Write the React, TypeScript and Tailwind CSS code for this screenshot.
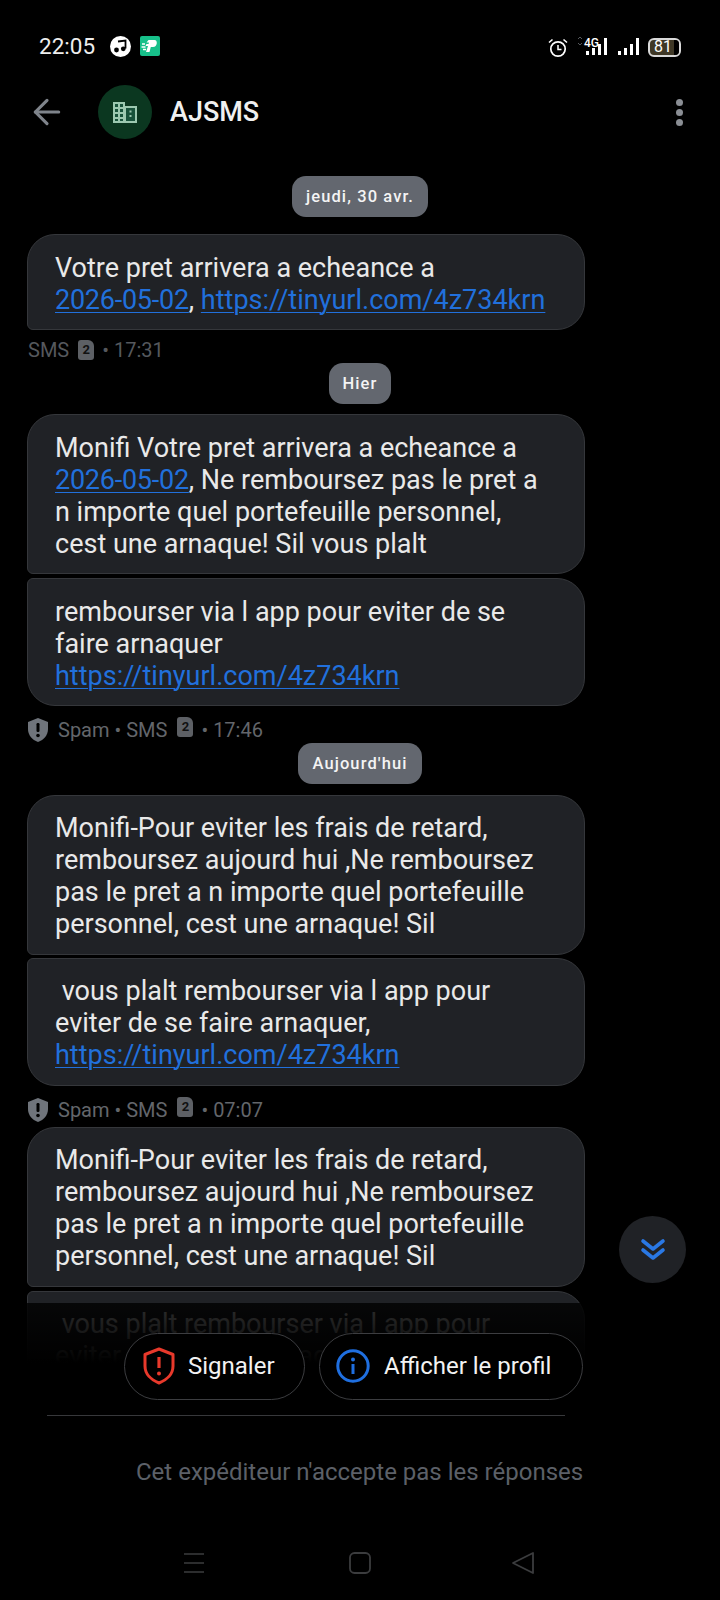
import { ArrowLeft } from "lucide-react";

const Link = ({ children, date }: { children: React.ReactNode; date?: boolean }) => (
  <span className={`text-[#2170dc] underline decoration-1 underline-offset-[3px] ${date ? "tracking-[-0.25px]" : ""}`}>
    {children}
  </span>
);

function Bubble({ children, className = "" }: { children: React.ReactNode; className?: string }) {
  return (
    <div
      className={`w-[558px] rounded-[28px] border border-[#35373b] bg-[#202226] px-[27px] text-[27px] leading-[32px] text-[#e9e9e9] whitespace-pre ${className}`}
    >
      {children}
    </div>
  );
}

function DateChip({ label, className = "" }: { label: string; className?: string }) {
  return (
    <div className={`flex justify-center ${className}`}>
      <span className="flex h-[41px] items-center rounded-[14px] bg-[#63676f] px-[14px] pt-[2px] text-[16.5px] font-medium tracking-[1.1px] text-[#f4f4f4]">
        {label}
      </span>
    </div>
  );
}

function SimIcon({ className = "" }: { className?: string }) {
  return (
    <span
      className={`inline-flex h-[20px] w-[16px] items-center justify-center rounded-[3px] rounded-tr-[6px] bg-[#5d6065] text-[13px] font-bold text-[#111] ${className}`}
    >
      2
    </span>
  );
}

function Meta({ time, spam }: { time: string; spam?: boolean }) {
  if (spam) {
    return (
      <div className="flex h-[41px] items-center pt-[7px] text-[20px] text-[#63666b]">
        <svg width="22" height="26" viewBox="0 0 22 26" className="mr-[9px]">
          <path d="M11 1 L21 5 V12 C21 18 17 23 11 25 C5 23 1 18 1 12 V5 Z" fill="#6f747b" />
          <rect x="9.5" y="6" width="3" height="9" rx="1.2" fill="#000" />
          <circle cx="11" cy="18.5" r="1.8" fill="#000" />
        </svg>
        <span>Spam • SMS</span>
        <SimIcon className="ml-[10px] mr-[8px] -mt-[6px]" />
        <span>• {time}</span>
      </div>
    );
  }
  return (
    <div className="flex h-[37px] items-center pl-px pt-[3px] text-[20px] text-[#55585d]">
      <span>SMS</span>
      <SimIcon className="ml-[9px] mr-[8px]" />
      <span>• {time}</span>
    </div>
  );
}

function StatusBar() {
  return (
    <div className="flex h-[85px] items-start justify-between pl-[39px] pr-[39px] pt-[33px] text-white">
      <div className="flex items-center">
        <span className="text-[22.5px] leading-[26px] text-[#eeeeee]">22:05</span>
        <svg width="21" height="21" viewBox="0 0 21 21" className="ml-[15px]">
          <circle cx="10.5" cy="10.5" r="10.5" fill="#fff" />
          <path d="M8 5.5 L15.5 4.5 V12.5" stroke="#000" strokeWidth="1.8" fill="none" />
          <circle cx="6.5" cy="14" r="2.4" fill="#000" />
          <circle cx="13.3" cy="12.8" r="2.4" fill="#000" />
        </svg>
        <svg width="20" height="20" viewBox="0 0 20 20" className="ml-[9px]">
          <rect width="20" height="20" rx="2" fill="#17c08a" />
          <path d="M8.5 4 H14.5 C18 4 17.5 11 13 11 H10.8 L9.5 16 H6 L8 10 H5.5 L6.5 8 H8.5 L9 6.5 H6.5 Z" fill="#fff" />
          <path d="M2 8 H5 M1.5 11 H5.5 M3 13.5 H6" stroke="#fff" strokeWidth="1.3" />
        </svg>
      </div>
      <div className="mt-[3px] flex items-center">
        <svg width="20" height="20" viewBox="0 0 20 20" className="-ml-[1px] mr-[1px] mt-[2px]">
          <circle cx="10" cy="11" r="7.2" stroke="#fff" strokeWidth="1.7" fill="none" />
          <path d="M10 7 V11.5 H13.5" stroke="#fff" strokeWidth="1.5" fill="none" />
          <path d="M1 4.5 L4.5 1.5 M19 4.5 L15.5 1.5" stroke="#fff" strokeWidth="1.6" />
        </svg>
        <div className="relative ml-[8px] h-[20px] w-[32px]">
          <span className="absolute left-[7px] -top-[1px] text-[12px] font-medium leading-[14px] text-white">4G</span>
          <svg width="32" height="20" viewBox="0 0 32 20" className="absolute inset-0">
            <path d="M1 2 L3 0 L5 2 M1 6 L3 8 L5 6" stroke="#55585c" strokeWidth="1" fill="none" />
            <rect x="9" y="14" width="3" height="4" fill="#fff" />
            <rect x="15" y="11" width="3" height="7" fill="#fff" />
            <rect x="21" y="7" width="3" height="11" fill="#fff" />
            <rect x="27" y="1" width="3" height="17" fill="#fff" />
          </svg>
        </div>
        <svg width="23" height="18" viewBox="0 0 23 18" className="ml-[8px]">
          <rect x="1" y="13" width="3" height="4" fill="#fff" />
          <rect x="7" y="10" width="3" height="7" fill="#fff" />
          <rect x="13" y="6" width="3" height="11" fill="#fff" />
          <rect x="19" y="0" width="3" height="17" fill="#fff" />
        </svg>
        <div className="relative ml-[8px] flex h-[19px] w-[33px] items-center overflow-hidden rounded-[6px] border-2 border-[#d9d9d9] bg-[#3f3826]">
          <span className="pl-[4px] text-[16px] leading-[14px] text-white">81</span>
          <span className="absolute bottom-0 right-0 top-0 w-[5px] bg-black" />
        </div>
      </div>
    </div>
  );
}

function Header() {
  return (
    <div className="flex h-[54px] items-center">
      <ArrowLeft size={40} strokeWidth={1.9} className="ml-[27px] text-[#7f848b]" />
      <div className="ml-[31px] flex h-[54px] w-[54px] items-center justify-center rounded-full bg-[#0b3720]">
        <svg width="24" height="21" viewBox="0 0 24 21" fill="#9cc8b0">
          <path d="M0 0 H12 V4 H24 V21 H0 Z" />
          <path
            d="M2 2 H5 V5 H2 Z M7 2 H10 V5 H7 Z M2 7 H5 V10 H2 Z M7 7 H10 V10 H7 Z M2 12 H5 V15 H2 Z M7 12 H10 V15 H7 Z M2 17 H5 V19 H2 Z M7 17 H10 V19 H7 Z M13 6 H22 V19 H13 Z"
            fill="#17523a"
          />
          <path d="M16.5 8.5 H18.5 V10.5 H16.5 Z M16.5 13 H18.5 V15 H16.5 Z" />
        </svg>
      </div>
      <span className="ml-[18px] mt-px text-[27px] font-medium text-[#f0f0f0]">AJSMS</span>
      <div className="ml-auto mr-[37px] flex flex-col gap-[3px]">
        <span className="h-[7px] w-[7px] rounded-full bg-[#8a8e94]" />
        <span className="h-[7px] w-[7px] rounded-full bg-[#8a8e94]" />
        <span className="h-[7px] w-[7px] rounded-full bg-[#8a8e94]" />
      </div>
    </div>
  );
}

function Messages() {
  return (
    <div className="pl-[27px]">
      <div className="w-[666px]">
        <DateChip label="jeudi, 30 avr." className="pt-[37px]" />
        <Bubble className="mt-[17px] rounded-bl-[6px] pb-[13px] pt-[17px]">
          {"Votre pret arrivera a echeance a\n"}
          <Link date>2026-05-02</Link>, <Link>https://tinyurl.com/4z734krn</Link>
        </Bubble>
        <Meta time="17:31" />
        <DateChip label="Hier" className="-mt-[4px]" />
        <Bubble className="mt-[10px] rounded-bl-[6px] pb-[13px] pt-[17px]">
          {"Monifi Votre pret arrivera a echeance a\n"}
          <Link date>2026-05-02</Link>
          {", Ne remboursez pas le pret a\nn importe quel portefeuille personnel,\ncest une arnaque! Sil vous plalt"}
        </Bubble>
        <Bubble className="mt-[4px] rounded-tl-[6px] pb-[13px] pt-[17px]">
          {"rembourser via l app pour eviter de se\nfaire arnaquer\n"}
          <Link>https://tinyurl.com/4z734krn</Link>
        </Bubble>
        <Meta time="17:46" spam />
        <DateChip label="Aujourd'hui" className="-mt-[4px]" />
        <Bubble className="mt-[11px] rounded-bl-[6px] pb-[14px] pt-[16px]">
          {"Monifi-Pour eviter les frais de retard,\nremboursez aujourd hui ,Ne remboursez\npas le pret a n importe quel portefeuille\npersonnel, cest une arnaque! Sil"}
        </Bubble>
        <Bubble className="mt-[3px] rounded-tl-[6px] pb-[14px] pt-[16px]">
          {" vous plalt rembourser via l app pour\neviter de se faire arnaquer,\n"}
          <Link>https://tinyurl.com/4z734krn</Link>
        </Bubble>
        <Meta time="07:07" spam />
        <Bubble className="rounded-bl-[6px] pb-[14px] pt-[16px]">
          {"Monifi-Pour eviter les frais de retard,\nremboursez aujourd hui ,Ne remboursez\npas le pret a n importe quel portefeuille\npersonnel, cest une arnaque! Sil"}
        </Bubble>
        <Bubble className="mt-[4px] rounded-tl-[6px] pb-[14px] pt-[16px]">
          {" vous plalt rembourser via l app pour\neviter de se faire arnaquer,\n"}
          <Link>https://tinyurl.com/4z734krn</Link>
        </Bubble>
      </div>
    </div>
  );
}

function ActionBar() {
  return (
    <div className="absolute inset-x-0 bottom-0 top-[1303px] bg-linear-to-b from-[#000000cc] to-black to-[60px]">
      <div className="ml-[124px] mt-[30px] flex gap-[14px]">
        <button className="flex h-[67px] w-[181px] items-center rounded-[34px] border border-[#3c3d40] bg-black pb-[2px] pl-[17px] text-[24px] text-[#f2f2f2]">
          <svg width="34" height="38" viewBox="0 0 34 38" fill="none">
            <path
              d="M17 2 L31 7.5 V19 C31 27 25 33 17 36 C9 33 3 27 3 19 V7.5 Z"
              stroke="#e8392b"
              strokeWidth="3"
              strokeLinejoin="round"
            />
            <path d="M17 10 V21" stroke="#e8392b" strokeWidth="3.2" />
            <circle cx="17" cy="26.5" r="2" fill="#e8392b" />
          </svg>
          <span className="ml-[12px]">Signaler</span>
        </button>
        <button className="flex h-[67px] w-[264px] items-center rounded-[34px] border border-[#3c3d40] bg-black pb-[2px] pl-[16px] text-[24px] text-[#f2f2f2]">
          <svg width="34" height="34" viewBox="0 0 34 34" fill="none">
            <circle cx="17" cy="17" r="15.2" stroke="#1f6fe0" strokeWidth="3" />
            <circle cx="17" cy="10.5" r="2" fill="#1f6fe0" />
            <path d="M17 15 V25" stroke="#1f6fe0" strokeWidth="3" />
          </svg>
          <span className="ml-[14px]">Afficher le profil</span>
        </button>
      </div>
      <div className="ml-[47px] mt-[15px] h-px w-[518px] bg-[#37383b]" />
      <div className="ml-[136px] mt-[41px] text-[24px] leading-[30px] text-[#5c6068]">
        Cet expéditeur n'accepte pas les réponses
      </div>
      <div className="mt-[64px] flex items-center pl-[183px]">
        <svg width="22" height="20" viewBox="0 0 22 20" stroke="#3b3c3e" strokeWidth="1.7">
          <path d="M1 1 H21 M1 10 H21 M1 19 H21" />
        </svg>
        <svg width="22" height="22" viewBox="0 0 22 22" fill="none" className="ml-[144px]" stroke="#3b3c3e" strokeWidth="1.8">
          <rect x="1" y="1" width="20" height="20" rx="4.5" />
        </svg>
        <svg width="24" height="24" viewBox="0 0 24 24" fill="none" className="ml-[140px]" stroke="#3b3c3e" strokeWidth="1.8" strokeLinejoin="round">
          <path d="M22 2 V22 L2 12 Z" />
        </svg>
      </div>
    </div>
  );
}

export default function App() {
  return (
    <div className="relative h-[1600px] w-[720px] overflow-hidden bg-black font-['Roboto',sans-serif]">
      <StatusBar />
      <Header />
      <Messages />
      <ActionBar />
      <div className="absolute left-[619px] top-[1216px] flex h-[67px] w-[67px] items-center justify-center rounded-full bg-[#202226]">
        <svg width="26" height="24" viewBox="0 0 26 24" fill="none" stroke="#2a78e4" strokeWidth="3.6" strokeLinecap="round" strokeLinejoin="round">
          <path d="M3 3 L13 11 L23 3 M3 12 L13 20 L23 12" />
        </svg>
      </div>
    </div>
  );
}
